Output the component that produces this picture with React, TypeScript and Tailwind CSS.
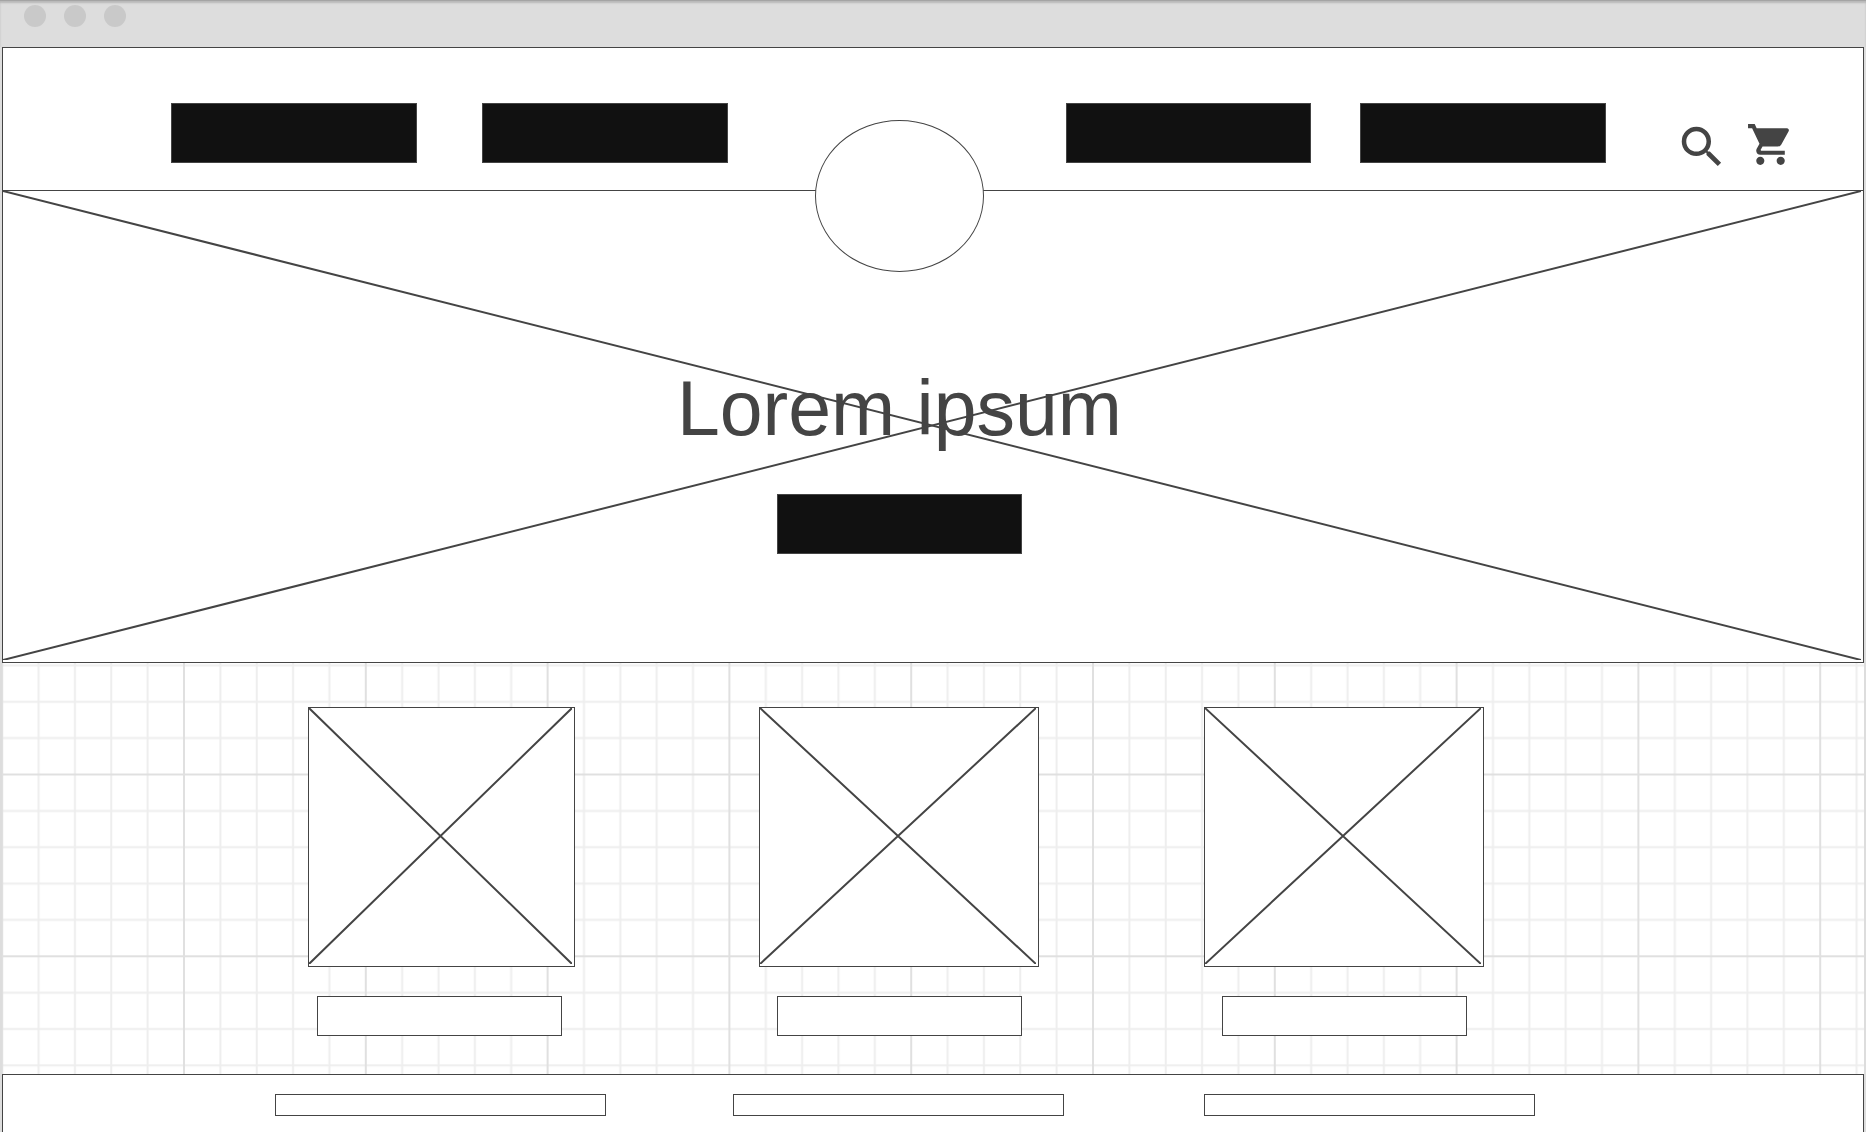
import React from "react";
import { MdSearch, MdShoppingCart } from "react-icons/md";

const navLinks = [
  { label: "Navigation item 1", place: "col-start-2" },
  { label: "Navigation item 2", place: "col-start-4" },
  { label: "Navigation item 3", place: "col-start-8" },
  { label: "Navigation item 4", place: "col-start-10" },
];

const cards = [
  { place: "col-start-2", indent: "ml-[9px]" },
  { place: "col-start-4", indent: "ml-[18px]" },
  { place: "col-start-6", indent: "ml-[18px]" },
];

const footerLinks = ["col-start-2", "col-start-4", "col-start-6"];

/** Two diagonals that mark an image placeholder. */
function Cross() {
  return (
    <svg
      className="absolute inset-0 h-full w-full pr-0.5 pb-0.5"
      viewBox="0 0 100 100"
      preserveAspectRatio="none"
      aria-hidden="true"
    >
      <path
        d="M0 0L100 100M0 100L100 0"
        fill="none"
        stroke="#444444"
        strokeWidth="2"
        vectorEffect="non-scaling-stroke"
      />
    </svg>
  );
}

/** Drafting paper: fine squares with a heavier line every fifth square. */
function GridPaper() {
  const step = 36.36;
  const size = step * 5;
  return (
    <svg className="absolute inset-0 h-full w-full" aria-hidden="true">
      <defs>
        <pattern id="paper" x="91.1" y="20.6" width={size} height={size} patternUnits="userSpaceOnUse">
          {[0.5, 1.5, 3.5, 4.5].map((n) => (
            <path key={n} d={`M${n * step} 0V${size}M0 ${n * step}H${size}`} stroke="#eeeeee" strokeWidth="2" />
          ))}
          <path d={`M${size / 2} 0V${size}M0 ${size / 2}H${size}`} stroke="#e0e0e0" strokeWidth="2" />
        </pattern>
      </defs>
      <rect width="100%" height="100%" fill="url(#paper)" />
    </svg>
  );
}

export default function App() {
  return (
    <div className="flex min-h-screen flex-col bg-[#dddddd] font-['Liberation_Sans',Arial,sans-serif] text-[#444444]">
      <div className="flex h-[47px] gap-[18px] border-t border-[#a4a4a4] pt-1 pl-6 shadow-[inset_0_2px_2px_#b8b8b8]">
        <span className="size-[22px] rounded-full bg-[#c9c9c9]" />
        <span className="size-[22px] rounded-full bg-[#c9c9c9]" />
        <span className="size-[22px] rounded-full bg-[#c9c9c9]" />
      </div>

      <div className="mx-0.5 flex grow flex-col bg-white">
        <header className="relative z-10 grid h-[144px] grid-cols-[168fr_246fr_65fr_246fr_87fr_169fr_82fr_245fr_49fr_246fr_69fr_54fr_17fr_49fr_68fr] items-start border border-[#444444] pt-[55px]">
          {navLinks.map((link) => (
            <a
              key={link.label}
              href="#"
              aria-label={link.label}
              className={`row-start-1 h-[60px] border border-[#444444] bg-[#111111] ${link.place}`}
            />
          ))}
          <a
            href="#"
            aria-label="Home"
            className="col-start-6 row-start-1 mt-[17px] h-[152px] rounded-[50%] border border-[#444444] bg-white"
          />
          <button type="button" aria-label="Search" className="col-start-12 row-start-1 mt-[17px]">
            <MdSearch size={54} />
          </button>
          <button type="button" aria-label="Cart" className="col-start-14 row-start-1 mt-[17px]">
            <MdShoppingCart size={49} />
          </button>
        </header>

        <section className="relative flex h-[472px] flex-col items-center gap-[42px] border-x border-b border-[#444444] pt-[173px] pr-[67px]">
          <Cross />
          <h1 className="text-[77px] leading-[88px]">Lorem ipsum</h1>
          <button
            type="button"
            aria-label="Call to action"
            className="relative h-[60px] w-[245px] border border-[#444444] bg-[#111111]"
          />
        </section>

        <main className="relative grid grid-cols-[306fr_267fr_184fr_280fr_165fr_280fr_380fr] pt-[44px] pb-[38px]">
          <GridPaper />
          {cards.map((card) => (
            <article key={card.place} className={`relative row-start-1 flex flex-col gap-[29px] ${card.place}`}>
              <div className="relative h-[260px] border border-[#444444] bg-white">
                <Cross />
              </div>
              <div className={`h-10 w-[245px] border border-[#444444] bg-white ${card.indent}`} />
            </article>
          ))}
        </main>

        <footer className="grid grow grid-cols-[272fr_331fr_127fr_331fr_140fr_331fr_328fr] items-start border-x border-t border-[#444444] pt-[19px] pb-3">
          {footerLinks.map((place, i) => (
            <a
              key={place}
              href="#"
              aria-label={`Footer link ${i + 1}`}
              className={`row-start-1 h-[22px] border border-[#444444] ${place}`}
            />
          ))}
        </footer>
      </div>
    </div>
  );
}
